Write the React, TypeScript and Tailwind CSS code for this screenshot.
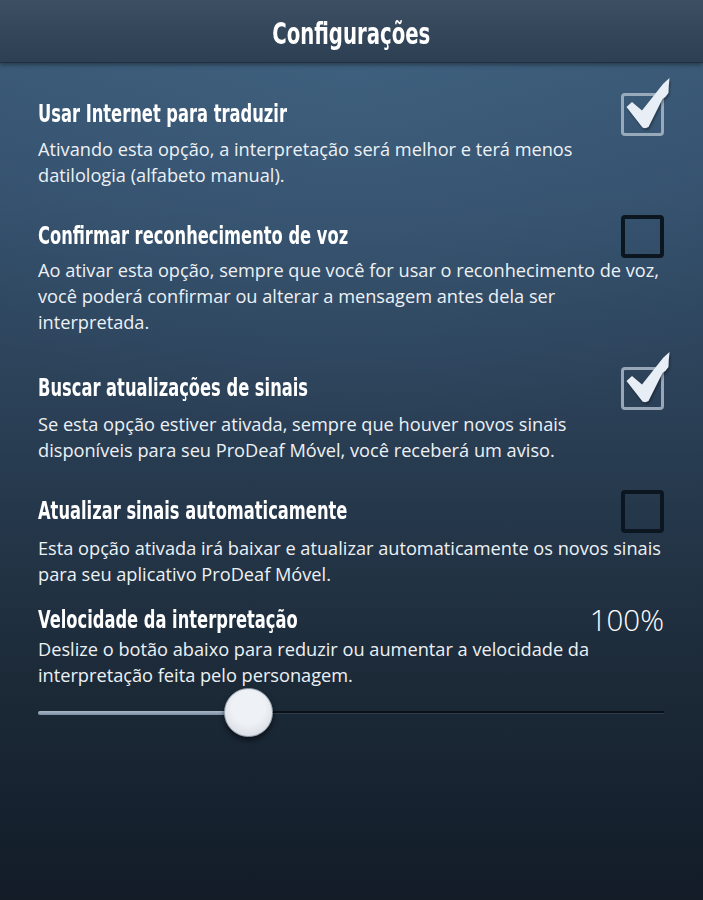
import type { ReactNode } from "react";

const TITLE_FONT = { fontFamily: '"DejaVu Sans Condensed", "DejaVu Sans", sans-serif' };
const BODY_FONT = { fontFamily: '"Open Sans", "Liberation Sans", sans-serif' };

const CheckBox = ({ checked }: { checked: boolean }) => {
  if (!checked) {
    return <div className="h-[43px] w-[43px] shrink-0 rounded-[4px] border-[4px] border-[#0c1620]" />;
  }
  return (
    <div className="relative h-[43px] w-[43px] shrink-0 rounded-[4px] border-[3px] border-[#a3b2c2]/90">
      <svg
        className="absolute left-[-9px] top-[-21px] drop-shadow-[1px_2px_1px_rgba(0,0,0,0.35)]"
        width="60"
        height="62"
        viewBox="0 0 60 62"
      >
        <path
          d="M11.5 32 L17 27 L27 35.5 L48 9 Q51 6 54.5 3 Q53.5 12 53.5 18 Q51 22 47.5 24 L33.5 52 Q30.5 54 27.5 52.5 Z"
          fill="#e8eef5"
        />
      </svg>
    </div>
  );
};

interface SettingProps {
  title: string;
  lines: string[];
  right: ReactNode;
  className?: string;
  descClass?: string;
}

const Setting = ({ title, lines, right, className, descClass }: SettingProps) => (
  <section className={className}>
    <div className="flex h-8 items-center justify-between">
      <h2
        className="inline-block origin-left scale-x-[0.755] text-[24px] leading-8 font-bold whitespace-nowrap text-white"
        style={TITLE_FONT}
      >
        {title}
      </h2>
      {right}
    </div>
    <p className={`text-[18.2px] leading-[26px] whitespace-nowrap text-[#edf1f5] ${descClass ?? "mt-[6px]"}`}>
      {lines.map((l, i) => (
        <span key={i} className="block">
          {l}
        </span>
      ))}
    </p>
  </section>
);

export default function App() {
  return (
    <div
      className="min-h-[900px] w-full bg-[radial-gradient(ellipse_70%_40%_at_50%_10%,rgba(80,120,155,0.22),transparent),linear-gradient(to_bottom,#3c5c7a_0px,#34506c_200px,#2a3f55_420px,#1c2a38_680px,#162230_800px,#131c27_900px)]"
      style={BODY_FONT}
    >
      <header className="flex h-[63px] items-center justify-center border-b border-[#22303e] bg-[linear-gradient(to_bottom,#3c4f63,#2d3f52)] pt-[4px] shadow-[0_2px_4px_rgba(0,0,0,0.35)]">
        <h1
          className="inline-block scale-x-[0.73] text-[30px] font-bold whitespace-nowrap text-white"
          style={TITLE_FONT}
        >
          Configurações
        </h1>
      </header>

      <main className="pl-[38px] pr-[39px]">
        <Setting
          className="pt-[35px]"
          title="Usar Internet para traduzir"
          lines={["Ativando esta opção, a interpretação será melhor e terá menos", "datilologia (alfabeto manual)."]}
          right={<CheckBox checked />}
        />
        <Setting
          className="pt-[32px]"
          descClass="mt-[5px]"
          title="Confirmar reconhecimento de voz"
          lines={[
            "Ao ativar esta opção, sempre que você for usar o reconhecimento de voz,",
            "você poderá confirmar ou alterar a mensagem antes dela ser",
            "interpretada.",
          ]}
          right={<CheckBox checked={false} />}
        />
        <Setting
          className="pt-[37px]"
          descClass="mt-[7px]"
          title="Buscar atualizações de sinais"
          lines={[
            "Se esta opção estiver ativada, sempre que houver novos sinais",
            "disponíveis para seu ProDeaf Móvel, você receberá um aviso.",
          ]}
          right={<CheckBox checked />}
        />
        <Setting
          className="pt-[32px]"
          descClass="mt-[8px]"
          title="Atualizar sinais automaticamente"
          lines={[
            "Esta opção ativada irá baixar e atualizar automaticamente os novos sinais",
            "para seu aplicativo ProDeaf Móvel.",
          ]}
          right={<CheckBox checked={false} />}
        />
        <Setting
          className="pt-[17px]"
          descClass="mt-0"
          title="Velocidade da interpretação"
          lines={[
            "Deslize o botão abaixo para reduzir ou aumentar a velocidade da",
            "interpretação feita pelo personagem.",
          ]}
          right={<span className="text-[29.5px] leading-8 font-light text-white">100%</span>}
        />

        <div className="relative flex h-[49px] items-center">
          <div className="h-[4px] w-[200px] rounded-l-full bg-[linear-gradient(to_bottom,#a7b6c6,#7d8fa3)]" />
          <div className="h-[3px] flex-1 border-b border-[#2e3d4c] bg-[#0a1017]" />
          <div className="absolute left-[186px] top-0 h-[49px] w-[49px] rounded-full border border-[#9aa3ad] bg-[radial-gradient(circle_at_50%_40%,#eef1f5_45%,#d9dde3_80%,#c4c9d0)] shadow-[0_3px_5px_rgba(0,0,0,0.55)]" />
        </div>
      </main>
    </div>
  );
}
